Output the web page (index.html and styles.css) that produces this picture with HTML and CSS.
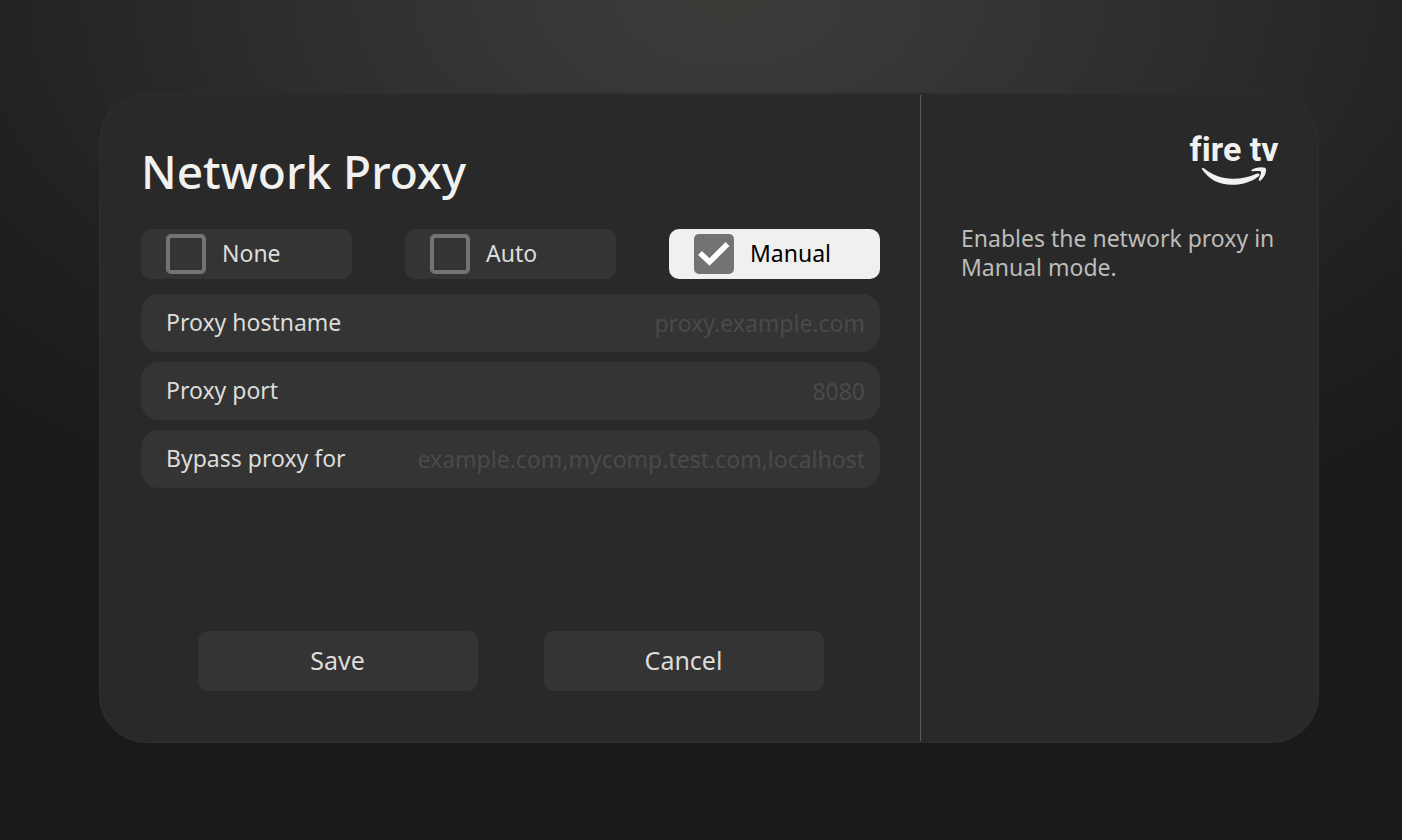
FILE: index.html
```html
<!DOCTYPE html>
<html lang="en">
<head>
    <meta charset="UTF-8">
    <meta name="viewport" content="width=device-width, initial-scale=1.0">
    <title>Network Proxy</title>
    <link rel="stylesheet" href="styles.css">
</head>
<body>
    <div class="dialog">
        <form class="settings">
            <h1>Network Proxy</h1>

            <div class="modes">
                <label class="mode"><input type="checkbox" name="none"><span>None</span></label>
                <label class="mode"><input type="checkbox" name="auto"><span>Auto</span></label>
                <label class="mode"><input type="checkbox" name="manual" checked><span>Manual</span></label>
            </div>

            <div class="fields">
                <div class="field">
                    <label for="hostname">Proxy hostname</label>
                    <input type="text" id="hostname" placeholder="proxy.example.com">
                </div>
                <div class="field">
                    <label for="port">Proxy port</label>
                    <input type="text" id="port" placeholder="8080">
                </div>
                <div class="field">
                    <label for="bypass">Bypass proxy for</label>
                    <input type="text" id="bypass" placeholder="example.com,mycomp.test.com,localhost">
                </div>
            </div>

            <div class="actions">
                <button type="button">Save</button>
                <button type="button">Cancel</button>
            </div>
        </form>

        <aside class="help">
            <div class="logo">
                <span class="logo-text">fire tv</span>
                <svg class="smile" viewBox="0 0 66 18">
                    <path d="M1.200 2.500C8 12.500 18 17.800 31 17.800C42 17.800 51 14.500 57.500 9.500C59.500 7.800 58 5.800 55.500 6.800C48 10.300 40 11.800 32 11.800C21 11.800 11 7.800 3.200 1.500C1.600 .3 .2 1 1.200 2.500Z"></path>
                    <path d="M50.800 2.800C54 .4 60 -.4 64 .8C66.500 2 64.500 9.500 59.800 13.500C58.500 14.300 57.200 13.600 57.800 12.200C59.300 8.500 60.500 5.500 59.800 4.600C59 3.600 55 3.900 52 4.300C50.300 4.400 49.800 3.600 50.800 2.800Z"></path>
                </svg>
            </div>
            <p>Enables the network proxy in Manual mode.</p>
        </aside>
    </div>
</body>
</html>
```

FILE: styles.css
```css
* {
    box-sizing: border-box;
}

body {
    margin: 0;
    min-height: 100vh;
    padding: 93px 83px 97px 99px;
    display: flex;
    background: radial-gradient(ellipse 1050px 600px at 52% 0, #3c3b38 0%, #383838 15%, #2e2e2e 42%, #202020 75%, #1a1a1a 100%);
    color: #dcdcda;
    font-family: "Noto Sans", sans-serif;
    font-size: 23px;
}

.dialog {
    flex: 1;
    display: grid;
    grid-template-columns: minmax(0, 1fr) 397px;
    background-color: #292929;
    border: 2px solid #2c2c2c;
    border-radius: 48px;
}

.settings {
    display: flex;
    flex-direction: column;
    padding: 44px 40px 50px;
}

h1 {
    margin: 0 0 26px;
    color: #f1f1ef;
    font-size: 46px;
    font-weight: 500;
    line-height: 64px;
}

.modes {
    display: grid;
    grid-template-columns: repeat(3, 1fr);
    gap: 53px;
    margin-bottom: 15px;
}

.mode {
    display: flex;
    align-items: center;
    gap: 16px;
    height: 50px;
    padding: 0 25px;
    background-color: #343434;
    border-radius: 10px;
}

.mode span,
.field label {
    padding-bottom: 2px;
}

.mode:has(input:checked) {
    background-color: #f0f0ee;
    color: #000;
}

.mode input {
    appearance: none;
    width: 40px;
    height: 40px;
    margin: 0;
    border: 4px solid #737371;
    border-radius: 5px;
}

.mode input:checked {
    background: #737371 url("data:image/svg+xml,%3Csvg xmlns='http://www.w3.org/2000/svg' viewBox='0 0 32 32'%3E%3Cpath d='M2 15L11.500 24L29.500 6' fill='none' stroke='white' stroke-width='5.500'/%3E%3C/svg%3E") center / 32px 32px no-repeat;
}

.fields {
    display: flex;
    flex-direction: column;
    gap: 10px;
}

.field {
    display: flex;
    align-items: center;
    gap: 16px;
    height: 58px;
    padding: 0 15px 0 25px;
    background-color: #343434;
    border-radius: 18px;
}

.field label {
    white-space: nowrap;
}

.field input {
    flex: 1;
    min-width: 0;
    padding: 0;
    border: none;
    outline: none;
    background: none;
    color: inherit;
    font: inherit;
    text-align: right;
}

.field input::placeholder {
    color: #4a4a48;
}

.actions {
    display: flex;
    justify-content: center;
    gap: 66px;
    margin-top: auto;
}

.actions button {
    width: 280px;
    height: 60px;
    padding: 0 0 2px;
    border: none;
    border-radius: 10px;
    background-color: #343434;
    color: inherit;
    font-family: inherit;
    font-size: 25px;
}

.help {
    padding: 36px 32px 36px 40px;
    border-left: 1px solid #5a5a5a;
    color: #bcbcba;
}

.help p {
    margin: 39px 0 0;
    line-height: 29px;
}

.logo {
    display: flex;
    flex-direction: column;
    align-items: center;
    width: 86px;
    margin: 0 8px 0 auto;
    color: #f1f1ef;
}

.logo-text {
    font-family: Roboto, sans-serif;
    font-size: 34px;
    font-weight: 700;
    font-variant-ligatures: none;
    line-height: 36px;
    white-space: nowrap;
}

.smile {
    width: 66px;
    height: 18px;
    fill: currentColor;
}
```
